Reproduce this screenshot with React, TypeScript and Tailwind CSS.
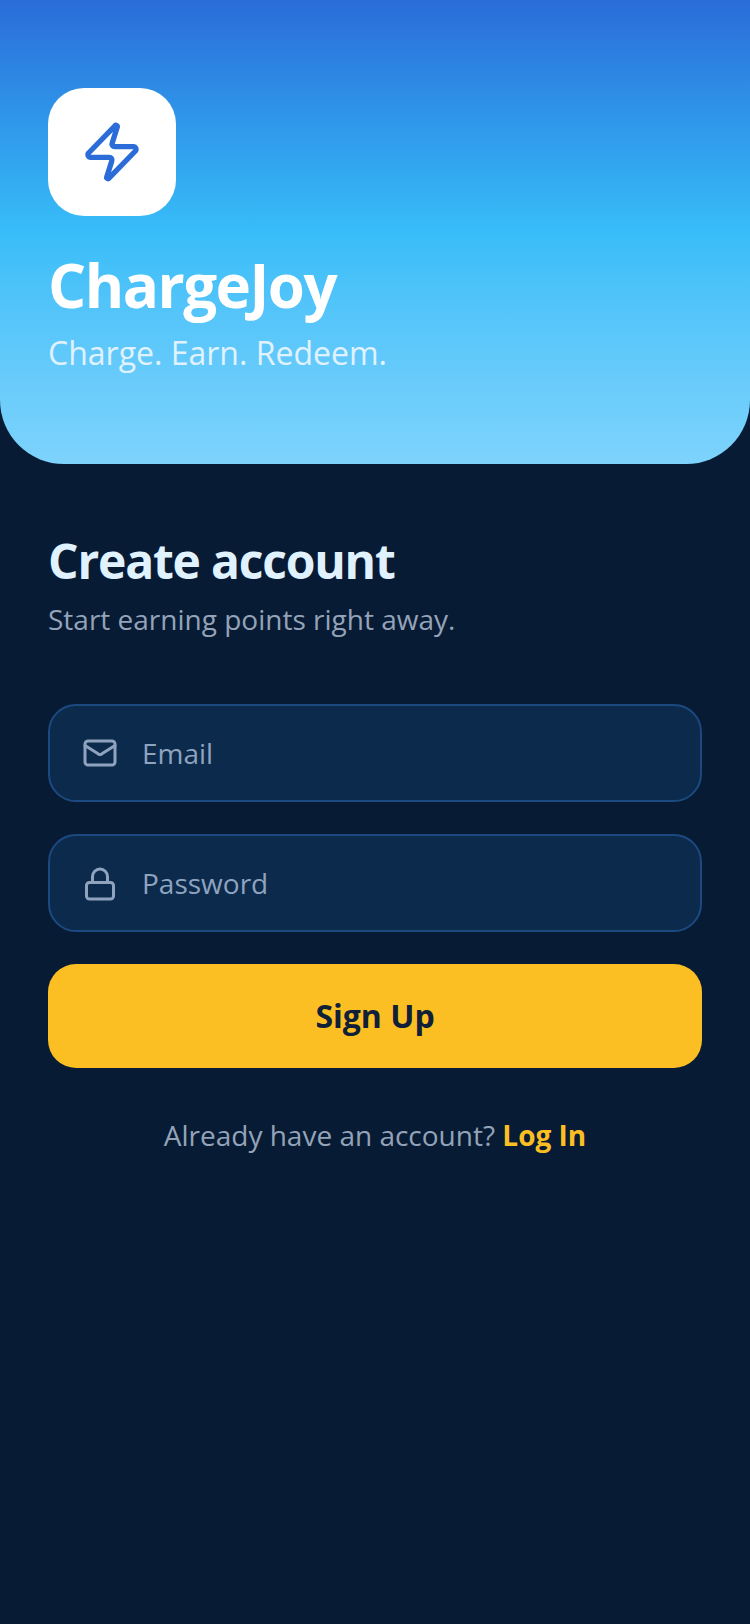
import { Lock, Mail, Zap } from "lucide-react";
import type { ReactNode } from "react";

type FieldProps = {
  icon: ReactNode;
  label: string;
};

function Field({ icon, label }: FieldProps) {
  return (
    <div className="h-[98px] rounded-[28px] border-2 border-[#1c4a80] bg-[#0c2a4b] px-8 flex items-center gap-6">
      {icon}
      <span className="text-[28px] text-[#8fa3bf]">{label}</span>
    </div>
  );
}

export default function App() {
  return (
    <div className="min-h-[1624px] w-[750px] bg-[#071b34] font-['Open_Sans',sans-serif]">
      <header className="h-[464px] rounded-b-[64px] bg-gradient-to-b from-[#2b6cd9] via-[#38bdf8] via-50% to-[#7dd3fc] px-12 pt-[88px]">
        <div className="size-32 rounded-[36px] bg-white flex items-center justify-center">
          <Zap size={64} strokeWidth={2} className="text-[#2b6cd9]" />
        </div>
        <h1 className="mt-[31px] text-[60px] leading-[76px] font-bold tracking-tight text-white">
          ChargeJoy
        </h1>
        <p className="mt-[9px] text-[32px] leading-[42px] text-[#e0f2fe]">
          Charge. Earn. Redeem.
        </p>
      </header>

      <main className="px-12 pt-[67px]">
        <h2 className="text-[48px] leading-[60px] font-bold tracking-tight text-[#e0f2fe]">
          Create account
        </h2>
        <p className="mt-[8px] text-[28px] leading-[40px] text-[#94a3b8]">
          Start earning points right away.
        </p>

        <div className="mt-[65px] flex flex-col gap-8">
          <Field icon={<Mail size={36} strokeWidth={2} className="text-[#8fa3bf]" />} label="Email" />
          <Field icon={<Lock size={36} strokeWidth={2} className="mt-[2px] text-[#8fa3bf]" />} label="Password" />
          <button className="h-[104px] rounded-[28px] bg-[#fbbf24] text-[32px] font-bold text-[#0f2038]">
            Sign Up
          </button>
        </div>

        <p className="mt-[47px] text-center text-[28px] leading-[40px] text-[#94a3b8]">
          Already have an account? <span className="font-bold text-[#fbbf24]">Log In</span>
        </p>
      </main>
    </div>
  );
}
